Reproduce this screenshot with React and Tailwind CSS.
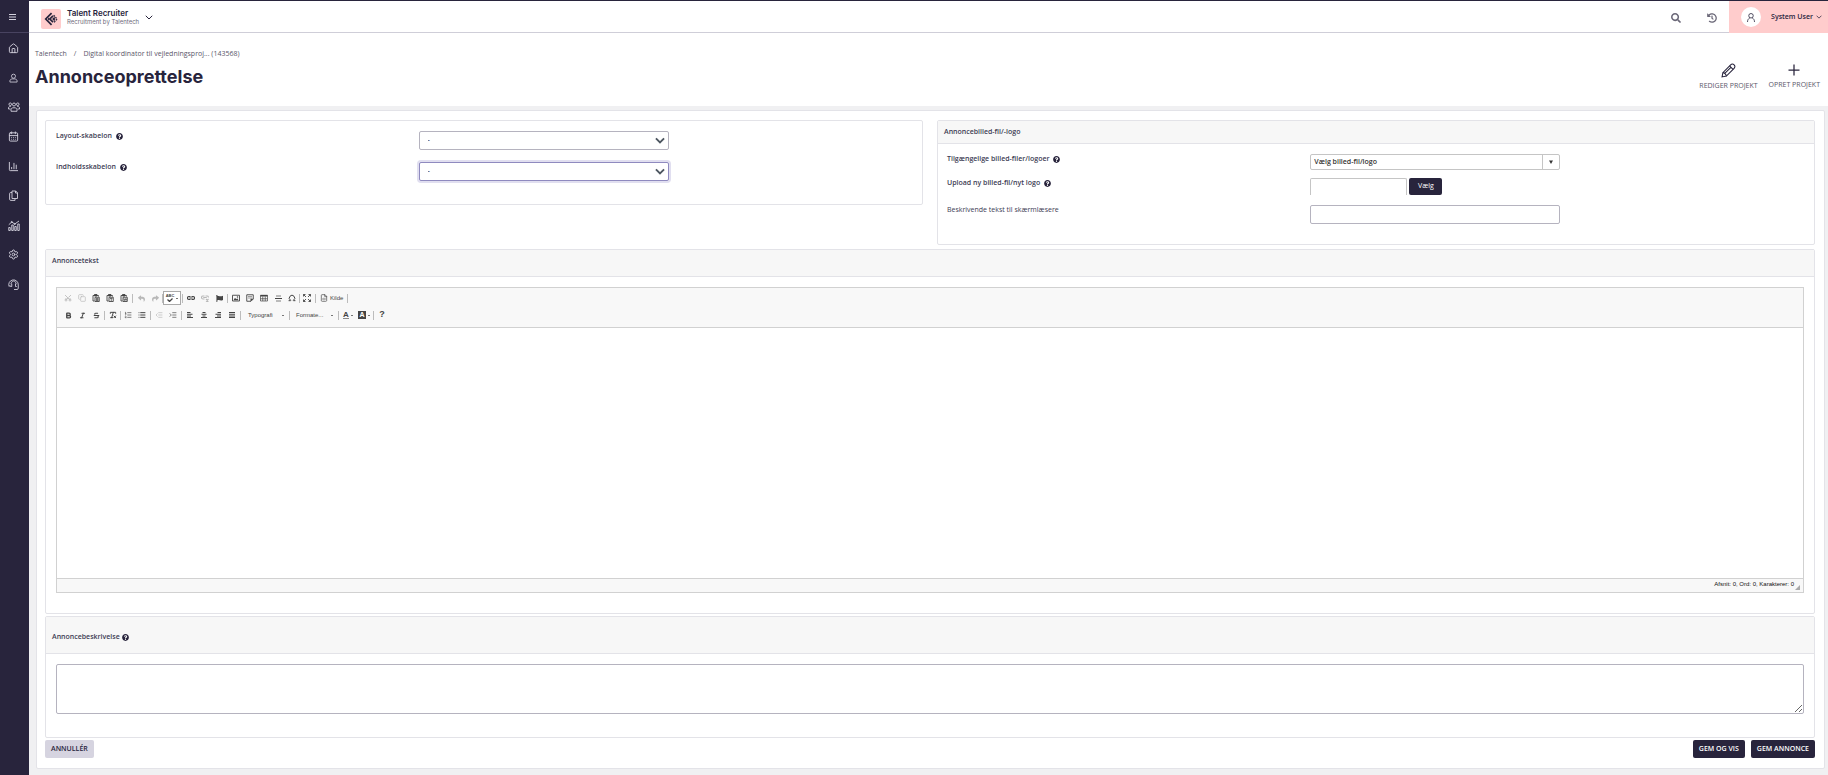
import {
  Bold, Italic, Strikethrough, Scissors, Copy, Omega, List, ListOrdered, ListIndentDecrease, ListIndentIncrease,
  House, CalendarDays, ChartColumn, Settings, RemoveFormatting, FileCode,
} from 'lucide-react';
import { FaQuestionCircle, FaSearch, FaHistory, FaFlag, FaReply, FaShare } from 'react-icons/fa';

const TeamIcon = () => (
  <svg viewBox="0 0 24 20" className="w-3 h-[10px]" fill="none" stroke="currentColor" strokeWidth="1.8">
    <circle cx="4.5" cy="4.5" r="2.6" />
    <circle cx="19.5" cy="4.5" r="2.6" />
    <circle cx="12" cy="5" r="3" />
    <path d="M1 14v-2.5C1 9.500 3 9 5.500 9M23 14v-2.500C23 9.500 21 9 18.500 9M1 14h4M23 14h-4" />
    <path d="M6 18.500v-3c0-3 2-4 6-4s6 1 6 4v3z" />
  </svg>
);

const UserIcon = ({ className }) => (
  <svg viewBox="0 0 20 20" className={className} fill="none" stroke="currentColor" strokeWidth="1.8">
    <circle cx="10" cy="6" r="4.500" />
    <path d="M2 19v-2c0-3 2-4.500 5-5h6c3 .5 5 2 5 5v2z" />
  </svg>
);

const StatsIcon = () => (
  <svg viewBox="0 0 24 22" className="w-3 h-[11px]" fill="none" stroke="currentColor" strokeWidth="1.8">
    <path d="M1.500 9.500 7.500 4l6 4L22 2" />
    <circle cx="7.500" cy="4" r="1.200" />
    <circle cx="13.500" cy="8" r="1.200" />
    <path d="M1.500 21v-6h3v6zM7.500 21V10h3v11zM13.500 21v-8h3v8zM19.500 21V8h3v13z" />
  </svg>
);

const PagesIcon = () => (
  <svg viewBox="0 0 18 22" className="w-[9px] h-[11px]" fill="none" stroke="currentColor" strokeWidth="1.8">
    <path d="M6 2h7.500L17 5.500V17H6z" />
    <path d="M13 2v4h4M6 5H3.500C2 5 1.200 6 1.200 7v11.500c0 1.500 1 2.300 2.300 2.300H12V17" />
  </svg>
);

const SupportIcon = () => (
  <svg viewBox="0 0 22 22" className="w-[11px] h-[11px]" fill="none" stroke="currentColor" strokeWidth="1.800">
    <path d="M2.500 15.500A9.500 9.500 0 1 1 20.500 12v6.500c0 1.500-1 2.500-2.500 2.500h-6" />
    <path d="M5 9.500h2.500V15H6c-1.500 0-2.500-1-2.500-2.500M17.500 9.500H15V15h2.500M7 8c0-2.500 2-4 4.200-4s4.300 1.500 4.300 4" />
  </svg>
);

const navItems = [
  { label: 'Hjem', icon: <House size={11} strokeWidth={2} /> },
  { label: 'Kandidater', icon: <UserIcon className="w-[9px] h-[10px]" /> },
  { label: 'Teams', icon: <TeamIcon /> },
  { label: 'Kalender', icon: <CalendarDays size={11} strokeWidth={2} /> },
  { label: 'Rapporter', icon: <ChartColumn size={11} strokeWidth={2} /> },
  { label: 'Dokumenter', icon: <PagesIcon /> },
  { label: 'Statistik', icon: <StatsIcon /> },
  { label: 'Indstillinger', icon: <Settings size={11} strokeWidth={2} /> },
  { label: 'Support', icon: <SupportIcon /> },
];

function Chevron({ className }) {
  return (
    <svg viewBox="0 0 16 10" className={className} fill="none" stroke="currentColor">
      <path d="M1.500 1.500 8 8l6.500-6.500" />
    </svg>
  );
}

function Help() {
  return <FaQuestionCircle className="w-[7px] h-[7px] shrink-0 text-[#28243c]" />;
}

function Sidebar() {
  return (
    <aside className="w-[29px] shrink-0 bg-[#28243c] text-[#d5d3df]">
      <button aria-label="Menu" className="w-full h-8 border-b border-[#484360] flex items-center justify-center pr-1">
        <svg viewBox="0 0 14 12" className="w-[7px] h-[6px]" stroke="currentColor" strokeWidth="2">
          <path d="M0 1h14M0 6h14M0 11h14" />
        </svg>
      </button>
      <nav className="h-[252px] mt-[7px] pr-[6px] flex flex-col justify-between">
        {navItems.map((item) => (
          <a key={item.label} href="#" aria-label={item.label} className="h-4 pl-1 flex items-center justify-center">
            {item.icon}
          </a>
        ))}
      </nav>
    </aside>
  );
}

function Header() {
  return (
    <header className="h-8 bg-white border-b border-[#cfced8] flex items-center pl-3">
      <span className="w-5 h-5 mt-1 rounded-[2px] bg-[#ffcccc] flex items-center justify-center">
        <svg viewBox="0 0 24 24" className="w-[14px] h-[14px]" fill="none" stroke="#28243c" strokeWidth="3">
          <path d="M13 2 3 12l10 10" />
          <path d="M15.500 6.500 10 12l5.500 5.500" />
          <path d="M18.500 9.500 16 12l2.500 2.500" />
          <path d="M16.500 5.500 22.500 12l-6 6.500" strokeWidth="2" strokeDasharray="3 1.500" />
          <path d="M8 10v4" strokeWidth="2" />
        </svg>
      </span>
      <div className="ml-[6px] font-['Inter',sans-serif]">
        <p className="text-[8px] leading-[9px] font-semibold text-[#28243c]">Talent Recruiter</p>
        <p className="text-[6px] leading-[7px] text-[#6f6c7c]">Recruitment by Talentech</p>
      </div>
      <button aria-label="Skift produkt" className="ml-[6px] pt-[2px]">
        <Chevron className="w-2 h-[5px] text-[#28243c] stroke-[2]" />
      </button>
      <div className="ml-auto h-full flex items-center">
        <button aria-label="Søg" className="mr-[26px] pt-[3px] text-[#6b6878]"><FaSearch size={10} /></button>
        <button aria-label="Historik" className="mr-3 pt-[3px] text-[#6b6878]"><FaHistory size={10} /></button>
        <button className="h-8 pl-3 pr-[6px] pt-px bg-[#ffcccc] flex items-center text-[#28243c]">
          <span className="w-5 h-5 rounded-full bg-white flex items-center justify-center">
            <svg viewBox="0 0 16 18" className="w-2 h-[9px]" fill="none" stroke="currentColor" strokeWidth="1.6">
              <circle cx="8" cy="5.500" r="4.500" />
              <path d="M1 18c0-4 1.500-6.500 4.500-8M15 18c0-4-1.500-6.500-4.500-8" />
            </svg>
          </span>
          <span className="ml-[10px] text-[7px] font-semibold">System User</span>
          <Chevron className="ml-[3px] w-[6px] h-1 stroke-[2]" />
        </button>
      </div>
    </header>
  );
}

function PageHead() {
  return (
    <div className="h-[73px] bg-white pl-[6px] pr-2 flex justify-between text-[#5a576a]">
      <div className="pt-4">
        <nav aria-label="Brødkrumme" className="flex text-[7px] leading-[10px]">
          <a href="#">Talentech</a>
          <span className="mx-[7px]">/</span>
          <a href="#">Digital koordinator til vejledningsproj... (143568)</a>
        </nav>
        <h1 className="mt-[6px] font-['Inter',sans-serif] text-[18px] leading-6 font-bold text-[#28243c]">Annonceoprettelse</h1>
      </div>
      <div className="pt-[30px] flex items-start gap-[11px] text-[7px] leading-[9px]">
        <button className="flex flex-col items-center gap-[3px]">
          <svg viewBox="0 0 28 28" className="w-[15px] h-[15px] text-[#28243c]" fill="none" stroke="currentColor" strokeWidth="2">
            <path d="M2 26l1.500-8L18 3.500C20 1.500 22.500 1.500 24.500 3.500S26.500 8 24.500 10L10 24.500z" />
            <path d="M3.500 18c3 0 6.500 3.500 6.500 6.500M16 5.500l6.500 6.500M7 19.500 18 8.500" />
          </svg>
          REDIGER PROJEKT
        </button>
        <button className="flex flex-col items-center gap-[3px]">
          <svg viewBox="0 0 28 28" className="w-[14px] h-[14px] text-[#28243c]" stroke="currentColor" strokeWidth="2.500">
            <path d="M14 3v22M3 14h22" />
          </svg>
          OPRET PROJEKT
        </button>
      </div>
    </div>
  );
}

function Panel({ title, headClass, className, children }) {
  return (
    <section className={`border border-[#e3e3e8] rounded-[2px] ${className}`}>
      {title && (
        <div className={`bg-[#f7f7f7] border-b border-[#e3e3e8] pl-[6px] flex items-center gap-[2px] text-[#403c54] ${headClass}`}>
          {title}
        </div>
      )}
      {children}
    </section>
  );
}

function Field({ id, label, help, children }) {
  return (
    <div className="flex items-start text-[#403c54]">
      <div className="w-[42%] mr-[3px] shrink-0 flex items-center gap-1 leading-[10px]">
        <label htmlFor={id}>{label}</label>
        {help && <Help />}
      </div>
      {children}
    </div>
  );
}

function Select({ id, focused }) {
  return (
    <div className="relative w-[250px]">
      <select
        id={id}
        className={`block w-full h-[19px] pl-2 appearance-none bg-white border rounded-[2px] ${
          focused ? 'border-[#8f8abf] ring-2 ring-[#e1dff0]' : 'border-[#b5b3bf]'
        }`}
      >
        <option>-</option>
      </select>
      <Chevron className="absolute right-1 top-[6px] w-[10px] h-[7px] text-[#4d5660] stroke-[3] pointer-events-none" />
    </div>
  );
}

const Sep = ({ tight }) => <span className={`w-px h-[9px] bg-[#bcbcbc] ${tight ? '' : 'mx-px'}`} />;
const Caret = () => <span className="w-[2px] h-px bg-[#777]" />;

function Tool({ label, faded, wide, children }) {
  return (
    <button
      title={label}
      aria-label={label}
      className={`h-[14px] flex items-center justify-center gap-[2px] ${wide ? 'w-4' : 'w-[14px]'} ${faded ? 'opacity-35' : ''}`}
    >
      {children}
    </button>
  );
}

// 16-unit toolbar glyph
function Glyph({ children }) {
  return (
    <svg viewBox="0 0 16 16" className="w-2 h-2" fill="none" stroke="currentColor" strokeWidth="1.800">
      {children}
    </svg>
  );
}

function PasteGlyph({ d }) {
  return (
    <Glyph>
      <path d="M5 14H2V3h11v2" />
      <path d="M5 1h5v3H5z" fill="currentColor" />
      <path d="M6 6.500h8.500V15H6z" />
      <path d={d} strokeWidth="1.500" />
    </Glyph>
  );
}

// text alignment buttons only differ in where the short lines start
function Align({ d }) {
  return (
    <svg viewBox="0 0 12 12" className="w-[6px] h-[6px]" stroke="currentColor" strokeWidth="2">
      <path d={d} />
    </svg>
  );
}

function Toolbar() {
  return (
    <div className="h-10 bg-[#f8f8f8] border-b border-[#d1d1d1] pl-1 pt-[3px] flex flex-col gap-[3px] text-[#444] font-['Liberation_Sans',Arial,sans-serif] text-[6px]">
      <div className="flex items-center">
        <Tool label="Klip" faded><Scissors size={8} strokeWidth={2.5} className="-rotate-90" /></Tool>
        <Tool label="Kopiér" faded><Copy size={8} /></Tool>
        <Tool label="Indsæt"><PasteGlyph d="M8 9h5M8 11h5M8 13h5" /></Tool>
        <Tool label="Indsæt som tekst"><PasteGlyph d="M8 9h5M10.500 9v5" /></Tool>
        <Tool label="Indsæt fra Word"><PasteGlyph d="M7.500 9l1.500 4 1.500-4 1.500 4 1.500-4" /></Tool>
        <Sep />
        <Tool label="Fortryd" faded><FaReply size={7} /></Tool>
        <Tool label="Annullér fortryd" faded><FaShare size={7} /></Tool>
        <Sep tight />
        <button aria-label="Stavekontrol" className="w-[18px] h-[14px] bg-white border border-[#aaa] flex items-center justify-center gap-[2px]">
          <span className="flex flex-col items-center">
            <span className="text-[4px] leading-[4px] font-bold">ABC</span>
            <svg viewBox="0 0 12 8" className="w-[6px] h-1" fill="none" stroke="currentColor" strokeWidth="2.500">
              <path d="M1 3l4 4 6-6" />
            </svg>
          </span>
          <Caret />
        </button>
        <Sep />
        <Tool label="Link">
          <Glyph><path d="M7 5H4a3 3 0 0 0 0 6h3M9 5h3a3 3 0 0 1 0 6H9M4.500 8h7" strokeWidth="2.400" /></Glyph>
        </Tool>
        <Tool label="Fjern link" faded>
          <Glyph><path d="M7 4H4a3 3 0 0 0 0 6h3M9 4h3a3 3 0 0 1 3 3M4.500 7h7M10 10l5 5M15 10l-5 5" strokeWidth="2.200" /></Glyph>
        </Tool>
        <Tool label="Bogmærke"><FaFlag size={7} /></Tool>
        <Sep />
        <Tool label="Billede">
          <Glyph>
            <path d="M1 2.500h14v11.500H1z" />
            <path d="M3 12.500l3-5 2.500 3 2-2 2.500 4z" fill="currentColor" stroke="none" />
            <circle cx="11" cy="6" r="1.500" fill="currentColor" stroke="none" />
          </Glyph>
        </Tool>
        <Tool label="Skabelon">
          <Glyph>
            <path d="M1.500 1.500h13V10L10 14.500H1.500z" />
            <path d="M4 5h8M4 8h8" strokeWidth="1" />
            <path d="M9 15V9.500h6z" fill="currentColor" stroke="none" />
          </Glyph>
        </Tool>
        <Tool label="Tabel">
          <Glyph>
            <path d="M1 2h14v3H1z" fill="currentColor" stroke="none" />
            <path d="M1 2.500h14V14H1zM1 9.500h14M5.500 5v9M10.500 5v9" strokeWidth="1.400" />
          </Glyph>
        </Tool>
        <Tool label="Vandret streg">
          <svg viewBox="0 0 14 14" className="w-[7px] h-[7px]">
            <path d="M2 0h10v4H2zM2 10h10v4H2z" fill="#bbb" />
            <path d="M0 6h14v2H0z" fill="currentColor" />
          </svg>
        </Tool>
        <Tool label="Specialtegn"><Omega size={8} strokeWidth={3} /></Tool>
        <Sep tight />
        <Tool label="Maksimér">
          <Glyph>
            <path d="M1 5V1h4M11 1h4v4M15 11v4h-4M5 15H1v-4M1 1l5 5M15 1l-5 5M1 15l5-5M15 15l-5-5" />
          </Glyph>
        </Tool>
        <Sep />
        <button className="h-[14px] px-[3px] flex items-center gap-[2px]">
          <FileCode size={8} strokeWidth={2} />
          Kilde
        </button>
        <Sep />
      </div>
      <div className="flex items-center">
        <Tool label="Fed"><Bold size={7} strokeWidth={4.5} /></Tool>
        <Tool label="Kursiv"><Italic size={7} strokeWidth={3.5} /></Tool>
        <Tool label="Gennemstreget"><Strikethrough size={7} strokeWidth={3.5} /></Tool>
        <Sep />
        <Tool label="Fjern formatering"><RemoveFormatting size={8} strokeWidth={3} /></Tool>
        <Sep tight />
        <Tool label="Nummereret liste"><ListOrdered size={8} /></Tool>
        <Tool label="Punktliste"><List size={8} strokeWidth={3} /></Tool>
        <Sep />
        <Tool label="Formindsk indrykning" faded><ListIndentDecrease size={8} /></Tool>
        <Tool label="Forøg indrykning"><ListIndentIncrease size={8} /></Tool>
        <Sep />
        <Tool label="Venstrestil"><Align d="M0 1h7M0 4.500h11M0 8h8M0 11h12" /></Tool>
        <Tool label="Centrér"><Align d="M3 1h6M1 4.500h10M3 8h6M0 11h12" /></Tool>
        <Tool label="Højrestil"><Align d="M5 1h7M1 4.500h11M4 8h8M0 11h12" /></Tool>
        <Tool label="Lige margener"><Align d="M0 1h12M0 4.500h12M0 8h12M0 11h12" /></Tool>
        <Sep />
        <button className="w-[46px] pl-[6px] pr-1 flex items-center justify-between">Typografi <Caret /></button>
        <Sep />
        <button className="w-[46px] pl-[5px] pr-1 flex items-center justify-between">Formate... <Caret /></button>
        <Sep />
        <Tool label="Tekstfarve" wide>
          <span className="text-[8px] leading-[7px] font-bold border-b border-[#888]">A</span>
          <Caret />
        </Tool>
        <Tool label="Baggrundsfarve" wide>
          <span className="w-2 text-[7px] leading-[8px] font-bold bg-[#444] text-white">A</span>
          <Caret />
        </Tool>
        <Sep />
        <Tool label="Om editoren"><span className="text-[9px] font-bold">?</span></Tool>
      </div>
    </div>
  );
}

function Editor() {
  return (
    <div className="mx-[10px] mt-[10px] mb-5 border border-[#d1d1d1]">
      <Toolbar />
      <textarea aria-label="Annoncetekst" className="block w-full h-[250px] resize-none outline-none bg-white" />
      <div className="h-[14px] bg-[#f8f8f8] border-t border-[#d1d1d1] flex justify-end pr-[3px] font-['Liberation_Sans',Arial,sans-serif] text-[6px] leading-[10px] text-[#111]">
        Afsnit: 0, Ord: 0, Karakterer: 0
        <svg viewBox="0 0 10 10" className="ml-px mt-[6px] w-[5px] h-[5px]"><path d="M10 0v10H0z" fill="#aaa" /></svg>
      </div>
    </div>
  );
}

export default function App() {
  return (
    <div className="min-h-screen flex flex-col border-t border-[#28243c] bg-[#f0f0f2] font-['Open_Sans',sans-serif] text-[7px] text-[#28243c]">
      <div className="flex flex-1">
        <Sidebar />
        <div className="flex-1 min-w-0">
          <Header />
          <PageHead />
          <main className="ml-[7px] mr-[3px] mt-1 mb-[6px] pl-2 pr-[9px] pt-[9px] pb-[10px] bg-white border border-[#e3e3e8] rounded-[2px]">
            <div className="grid grid-cols-2 gap-[14px] items-start font-semibold">
              <Panel className="h-[85px] px-[10px] pt-[10px] flex flex-col gap-3">
                <Field id="layout" label="Layout-skabelon" help><Select id="layout" /></Field>
                <Field id="content" label="Indholdsskabelon" help><Select id="content" focused /></Field>
              </Panel>
              <Panel title="Annoncebilled-fil/-logo" headClass="h-[23px]" className="h-[125px]">
                <div className="px-[9px] pt-[10px] flex flex-col">
                  <Field id="files" label="Tilgængelige billed-filer/logoer" help>
                    <div className="w-[250px] h-4 flex border border-[#c5c5c5] rounded-[2px]">
                      <input id="files" defaultValue="Vælg billed-fil/logo" className="flex-1 min-w-0 px-[3px] text-[#333] outline-none" />
                      <button aria-label="Åbn liste" className="w-[17px] border-l border-[#c5c5c5] flex items-center justify-center">
                        <svg viewBox="0 0 8 8" className="w-1 h-1"><path d="M0 1h8L4 8z" fill="#333" /></svg>
                      </button>
                    </div>
                  </Field>
                  <div className="mt-2">
                    <Field id="upload" label="Upload ny billed-fil/nyt logo" help>
                      <div className="flex gap-[2px]">
                        <input id="upload" className="w-[97px] h-[17px] border border-b-0 border-[#c5c5c5] rounded-t-[2px] outline-none" />
                        <button className="w-[33px] h-[17px] pb-px rounded-[2px] bg-[#28243c] text-white font-normal">Vælg</button>
                      </div>
                    </Field>
                  </div>
                  <div className="mt-[10px] font-normal">
                    <Field id="alt" label="Beskrivende tekst til skærmlæsere">
                      <input id="alt" className="w-[250px] h-[19px] px-1 border border-[#b5b3bf] rounded-[2px] outline-none" />
                    </Field>
                  </div>
                </div>
              </Panel>
            </div>

            <Panel title={<h2>Annoncetekst</h2>} headClass="h-[27px] pb-[3px] font-semibold" className="mt-1">
              <Editor />
            </Panel>

            <Panel
              title={<><label htmlFor="description">Annoncebeskrivelse</label><Help /></>}
              headClass="h-[37px] pt-1 font-semibold"
              className="mt-[2px]"
            >
              <div className="px-[10px] pt-[10px] pb-[23px]">
                <textarea id="description" className="block w-full h-[50px] px-1 border border-[#b5b3bf] rounded-[2px] outline-none" />
              </div>
            </Panel>

            <div className="mt-[2px] flex gap-[6px] font-semibold">
              <button className="h-[18px] px-[6px] mr-auto rounded-[2px] bg-[#d6d4e0]">ANNULLÉR</button>
              <button className="h-[18px] px-[6px] rounded-[2px] bg-[#28243c] text-white">GEM OG VIS</button>
              <button className="h-[18px] px-[6px] rounded-[2px] bg-[#28243c] text-white">GEM ANNONCE</button>
            </div>
          </main>
        </div>
      </div>
    </div>
  );
}
